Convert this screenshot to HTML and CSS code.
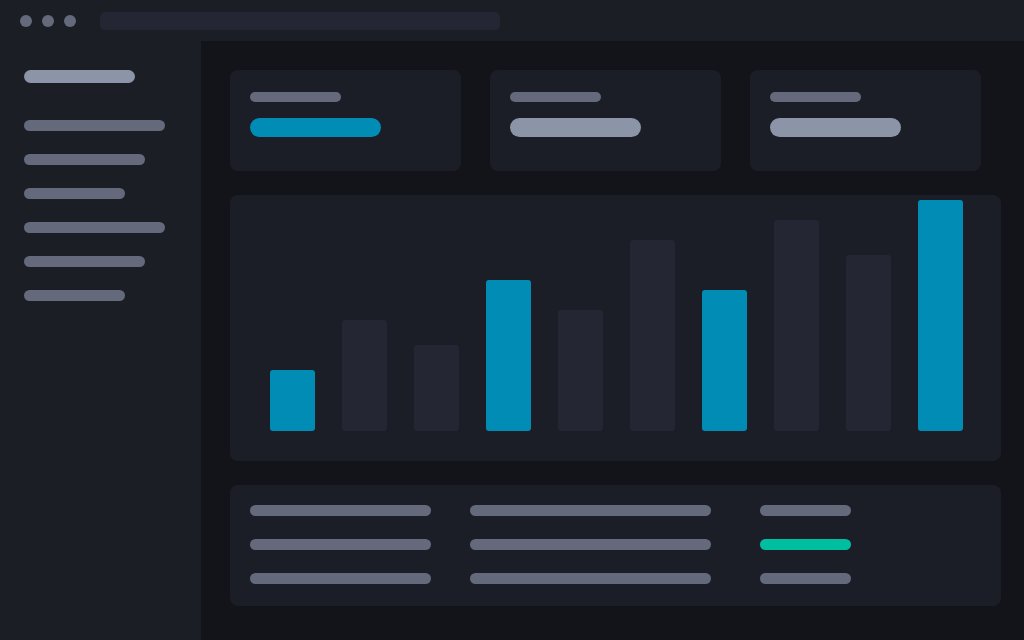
FILE: index.html
```html
<!DOCTYPE html>
<html>
<head>
<meta charset="utf-8">
<title>Dashboard</title>
<link rel="stylesheet" href="styles.css">
</head>
<body>
<div class="app">
  <header class="topbar">
    <div class="dots"><span class="dot"></span><span class="dot"></span><span class="dot"></span></div>
    <div class="url"></div>
  </header>
  <div class="body">
    <aside class="sidebar">
      <div class="brand"></div>
      <nav class="nav">
        <span class="nav-item w140"></span>
        <span class="nav-item w120"></span>
        <span class="nav-item w100"></span>
        <span class="nav-item w140"></span>
        <span class="nav-item w120"></span>
        <span class="nav-item w100"></span>
      </nav>
    </aside>
    <main class="main">
      <section class="stats">
        <div class="card stat"><span class="label"></span><span class="value accent"></span></div>
        <div class="card stat"><span class="label"></span><span class="value"></span></div>
        <div class="card stat"><span class="label"></span><span class="value"></span></div>
      </section>
      <section class="card chart">
        <span class="bar accent" style="height:61px"></span>
        <span class="bar" style="height:111px"></span>
        <span class="bar" style="height:86px"></span>
        <span class="bar accent" style="height:151px"></span>
        <span class="bar" style="height:121px"></span>
        <span class="bar" style="height:191px"></span>
        <span class="bar accent" style="height:141px"></span>
        <span class="bar" style="height:211px"></span>
        <span class="bar" style="height:176px"></span>
        <span class="bar accent" style="height:231px"></span>
      </section>
      <section class="card table">
        <span class="cell c1"></span><span class="cell c2"></span><span class="cell c3"></span>
        <span class="cell c1"></span><span class="cell c2"></span><span class="cell c3 ok"></span>
        <span class="cell c1"></span><span class="cell c2"></span><span class="cell c3"></span>
      </section>
    </main>
  </div>
</div>
</body>
</html>
```
FILE: styles.css
```css
* { box-sizing: border-box; }
html, body { margin: 0; padding: 0; }
body {
  width: 1024px;
  height: 640px;
  overflow: hidden;
  background: #13141a;
  font-family: "Inter", "Liberation Sans", sans-serif;
}
.app { display: flex; flex-direction: column; height: 640px; }

.topbar {
  height: 41px;
  flex: none;
  background: #1c1e26;
  display: flex;
  align-items: flex-start;
  padding: 0 0 0 20px;
}
.dots { display: flex; gap: 10px; width: 80px; margin-top: 15px; }
.dot { width: 12px; height: 12px; border-radius: 50%; background: #646a7c; }
.url { width: 400px; height: 18px; border-radius: 5px; background: #242733; margin-top: 12px; }

.body { flex: 1; display: flex; min-height: 0; }
.sidebar {
  width: 201px;
  flex: none;
  background: #1c1e26;
  padding: 29px 0 0 24px;
}
.brand { width: 111px; height: 13px; border-radius: 7px; background: #8c94a8; }
.nav { display: flex; flex-direction: column; gap: 23px; margin-top: 37px; }
.nav-item { display: block; height: 11px; border-radius: 6px; background: #646a7c; }
.w140 { width: 141px; }
.w120 { width: 121px; }
.w100 { width: 101px; }

.main {
  flex: 1;
  padding: 29px 0 0 29px;
  display: flex;
  flex-direction: column;
  gap: 24px;
}
.card { background: #1c1e27; border-radius: 8px; }

.stats { display: flex; gap: 29px; }
.stat {
  width: 231px;
  height: 101px;
  padding: 22px 20px 0;
  display: flex;
  flex-direction: column;
  align-items: flex-start;
  gap: 16px;
}
.label { display: block; width: 91px; height: 10px; border-radius: 5px; background: #646a7c; }
.value { display: block; width: 131px; height: 19px; border-radius: 10px; background: #8c94a8; }
.value.accent { background: #008cb4; }

.chart {
  width: 771px;
  height: 266px;
  display: flex;
  align-items: flex-end;
  gap: 27px;
  padding: 0 36px 30px 40px;
}
.bar { display: block; flex: none; width: 45px; border-radius: 3px; background: #242733; }
.bar.accent { background: #008cb4; }

.table {
  width: 771px;
  height: 121px;
  padding: 20px 20px 0;
  display: grid;
  grid-template-columns: 220px 290px 1fr;
  grid-auto-rows: 11px;
  row-gap: 23px;
}
.cell { display: block; height: 11px; border-radius: 6px; background: #646a7c; }
.c1 { width: 181px; }
.c2 { width: 241px; }
.c3 { width: 91px; }
.cell.ok { background: #00bfa0; }
```
